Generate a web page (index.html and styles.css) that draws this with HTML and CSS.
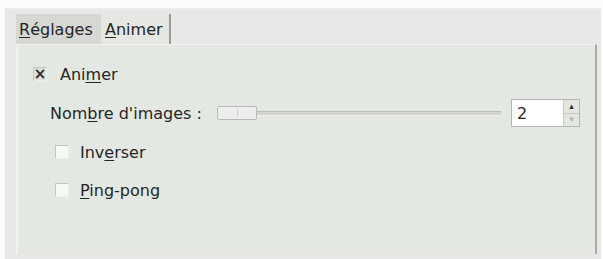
FILE: index.html
```html
<!DOCTYPE html>
<html lang="fr">
<head>
<meta charset="utf-8">
<link rel="stylesheet" href="styles.css">
</head>
<body>
<div class="frame">
  <div class="tabs">
    <div class="tab inactive"><u>R</u>églages</div>
    <div class="tab active"><u>A</u>nimer</div>
  </div>
  <div class="panel">
    <div class="row main-check">
      <span class="check checked">×</span>
      <span class="label">Ani<u>m</u>er</span>
    </div>
    <div class="row slider-row">
      <span class="label name">Nom<u>b</u>re d'images :</span>
      <div class="slider">
        <div class="thumb"><span class="grip"></span></div>
        <div class="track"></div>
      </div>
      <div class="spin">
        <span class="value">2</span>
        <div class="arrows">
          <span class="arr up">▴</span>
          <span class="arr down">▾</span>
        </div>
      </div>
    </div>
    <div class="row sub-check">
      <span class="check"></span>
      <span class="label">Inv<u>e</u>rser</span>
    </div>
    <div class="row sub-check">
      <span class="check"></span>
      <span class="label"><u>P</u>ing-pong</span>
    </div>
  </div>
</div>
</body>
</html>
```
FILE: styles.css
```css
html, body {
  margin: 0;
  padding: 0;
  background: #fbfbfa;
}
body {
  width: 603px;
  height: 259px;
  overflow: hidden;
  font-family: "DejaVu Sans", sans-serif;
  font-size: 16px;
  color: #262626;
}
.frame {
  margin: 8px 0 0 5px;
  width: 596px;
  height: 251px;
  box-sizing: border-box;
  border-left: 1px solid #e2e4e0;
  border-top: 1px solid #eceeea;
  background: #e8e9e6;
  padding: 5px 0 0 10px;
}
.tabs {
  display: flex;
  height: 30px;
  align-items: stretch;
}
.tab {
  display: flex;
  align-items: center;
  box-sizing: border-box;
  white-space: nowrap;
}
.tab.inactive {
  background: #d6d8d4;
  width: 85px;
  padding-left: 3px;
}
.tab.active {
  background: #e4e7e2;
  width: 70px;
  border-right: 2px solid #9a9c98;
  padding-left: 4px;
}
.panel {
  width: 581px;
  height: 210px;
  box-sizing: border-box;
  background: #e4e8e3;
  border-top: 1px solid #f2f4f0;
  border-right: 2px solid #a9aba7;
  border-left: 2px solid #f0f2ee;
  padding: 18px 0 0 15px;
}
.row {
  display: flex;
  align-items: center;
  white-space: nowrap;
}
.check {
  width: 14px;
  height: 14px;
  box-sizing: border-box;
  background: #f7f8f6;
  border-top: 1px solid #c4c6c2;
  border-left: 1px solid #c4c6c2;
  border-right: 1px solid #eef0ec;
  border-bottom: 1px solid #eef0ec;
  display: flex;
  align-items: center;
  justify-content: center;
  font-size: 15px;
  line-height: 1;
  font-weight: bold;
  color: #2a2a2a;
}
.check.checked {
  background: #dfe1dd;
}
.main-check {
  height: 22px;
}
.main-check .label {
  margin-left: 13px;
}
.slider-row {
  margin-top: 14px;
  height: 28px;
  padding-left: 17px;
}
.name {
  width: 155px;
}
.slider {
  margin-left: 12px;
  width: 284px;
  height: 14px;
  display: flex;
  align-items: center;
}
.thumb {
  width: 40px;
  height: 14px;
  box-sizing: border-box;
  border: 1px solid #b8bab6;
  border-radius: 2px;
  background: #eceeeb;
  display: flex;
  align-items: center;
  justify-content: center;
}
.grip {
  width: 1px;
  height: 8px;
  background: #cfd1cd;
}
.track {
  flex: 1;
  height: 3px;
  background: #d2d4d0;
  border-top: 1px solid #b9bbb7;
  border-bottom: 1px solid #eef0ec;
}
.spin {
  margin-left: 10px;
  width: 69px;
  height: 28px;
  box-sizing: border-box;
  border: 1px solid #b4b6b2;
  background: #ffffff;
  display: flex;
  align-items: center;
}
.value {
  flex: 1;
  padding-left: 5px;
  font-size: 16px;
}
.arrows {
  width: 15px;
  height: 26px;
  display: flex;
  flex-direction: column;
  background: #e4e6e2;
  border-left: 1px solid #c8cac6;
}
.arr {
  flex: 1;
  display: flex;
  align-items: center;
  justify-content: center;
  font-size: 9px;
  line-height: 1;
}
.arr.up { color: #333; border-bottom: 1px solid #c8cac6; }
.arr.down { color: #b0b2ae; }
.sub-check {
  height: 22px;
  padding-left: 22px;
}
.sub-check .label {
  margin-left: 11px;
}
.slider-row + .sub-check {
  margin-top: 14px;
}
.sub-check + .sub-check {
  margin-top: 16px;
}
u {
  text-decoration-thickness: 1px;
  text-underline-offset: 2px;
}
```
